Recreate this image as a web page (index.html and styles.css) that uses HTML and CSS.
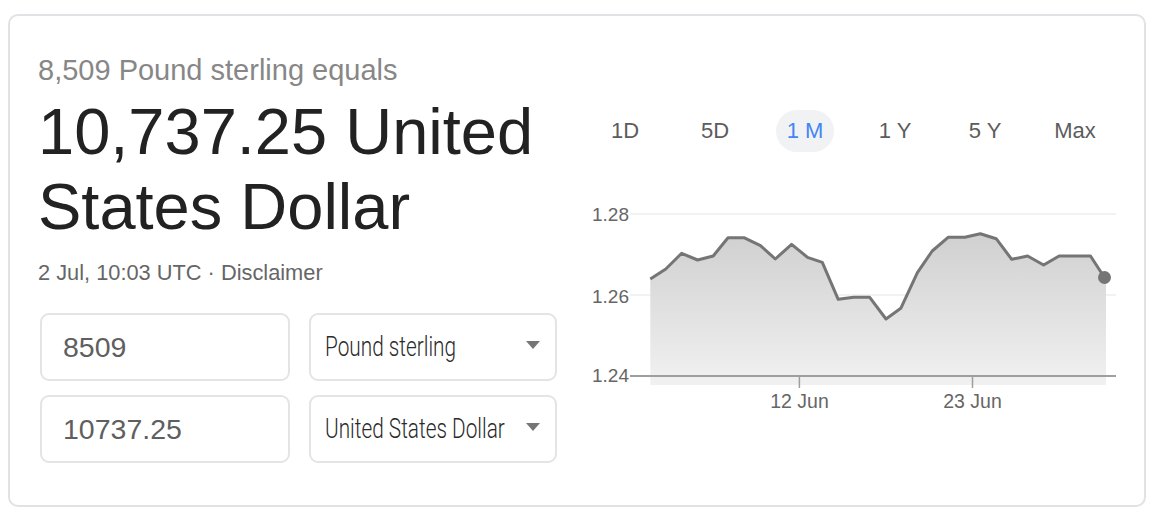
FILE: index.html
```html
<!DOCTYPE html>
<html lang="en">
<head>
<meta charset="utf-8">
<title>Currency converter</title>
<link rel="stylesheet" href="styles.css">
</head>
<body>
<div class="card">
  <div class="left">
    <div class="sub">8,509 Pound sterling equals</div>
    <div class="amount">10,737.25 United States Dollar</div>
    <div class="meta">2 Jul, 10:03 UTC · Disclaimer</div>
    <div class="converter">
      <div class="field num">8509</div>
      <div class="field select"><span class="sel-text">Pound sterling</span><span class="caret"></span></div>
      <div class="field num">10737.25</div>
      <div class="field select"><span class="sel-text">United States Dollar</span><span class="caret"></span></div>
    </div>
  </div>
  <div class="right">
    <div class="ranges">
      <div class="range"><span>1D</span></div>
      <div class="range"><span>5D</span></div>
      <div class="range active"><span>1 M</span></div>
      <div class="range"><span>1 Y</span></div>
      <div class="range"><span>5 Y</span></div>
      <div class="range"><span>Max</span></div>
    </div>
    <svg class="chart" width="540" height="220" viewBox="580 195 540 220" xmlns="http://www.w3.org/2000/svg">
      <defs>
        <linearGradient id="fillg" x1="0" y1="0" x2="0" y2="1">
          <stop offset="0" stop-color="#d0d0d0"/>
          <stop offset="1" stop-color="#f1f1f1"/>
        </linearGradient>
      </defs>
      <line x1="630" y1="214" x2="1116" y2="214" stroke="#eeeeee" stroke-width="1.5"/>
      <line x1="630" y1="295" x2="1116" y2="295" stroke="#eeeeee" stroke-width="1.5"/>
      <polygon fill="url(#fillg)" points="650.3,279 665.8,269 681.7,253.3 697.6,260 713.2,256 728,237.7 743.9,237.7 760.5,245.7 775.3,259 791.6,244.3 807.5,257.3 822.3,262.3 838.2,299.3 853.8,297.3 869.7,297.3 886,319 900.8,308.3 917.4,272.7 932.2,251 948.1,237.3 964.8,237.3 980.3,233.7 996.2,238.7 1011.7,259.3 1027.6,256 1043.6,265 1059.1,256 1075,256 1090.5,256 1104.6,277.7 1106,277.7 1106,385 650.3,385"/>
      <line x1="630" y1="376" x2="1116" y2="376" stroke="#9e9e9e" stroke-width="2"/>
      <line x1="799.4" y1="376" x2="799.4" y2="388" stroke="#9e9e9e" stroke-width="1.5"/>
      <line x1="972.5" y1="376" x2="972.5" y2="388" stroke="#9e9e9e" stroke-width="1.5"/>
      <polyline fill="none" stroke="#757575" stroke-width="3" stroke-linejoin="round" points="650.3,279 665.8,269 681.7,253.3 697.6,260 713.2,256 728,237.7 743.9,237.7 760.5,245.7 775.3,259 791.6,244.3 807.5,257.3 822.3,262.3 838.2,299.3 853.8,297.3 869.7,297.3 886,319 900.8,308.3 917.4,272.7 932.2,251 948.1,237.3 964.8,237.3 980.3,233.7 996.2,238.7 1011.7,259.3 1027.6,256 1043.6,265 1059.1,256 1075,256 1090.5,256 1104.6,277.7"/>
      <circle cx="1104.5" cy="277.5" r="6.5" fill="#757575"/>
      <text class="ylab" x="592" y="221">1.28</text>
      <text class="ylab" x="592" y="303">1.26</text>
      <text class="ylab" x="592" y="382">1.24</text>
      <text class="xlab" x="799.5" y="408" text-anchor="middle">12 Jun</text>
      <text class="xlab" x="972.5" y="408" text-anchor="middle">23 Jun</text>
    </svg>
  </div>
</div>
</body>
</html>
```
FILE: styles.css
```css
html, body {
  background: #ffffff;
}
body {
  margin: 8px;
  font-family: "Liberation Sans", Arial, Helvetica, sans-serif;
}
.card {
  box-sizing: border-box;
  width: 1138px;
  height: 493px;
  margin-top: 6px;
  border: 2px solid #e1e2e5;
  border-radius: 10px;
  display: flex;
  padding: 36px 23px 0 28px;
}
.left {
  width: 520px;
  flex: none;
}
.right {
  width: 540px;
  margin-left: 22px;
  flex: none;
}
.sub {
  font-size: 29px;
  line-height: 36px;
  color: #878787;
}
.amount {
  font-size: 65px;
  line-height: 75px;
  color: #222222;
  margin-top: 6px;
}
.meta {
  font-size: 21.8px;
  line-height: 26px;
  color: #666666;
  margin-top: 16px;
}
.converter {
  margin: 27px 0 0 2px;
  display: grid;
  grid-template-columns: 250px 248px;
  column-gap: 19px;
  row-gap: 14px;
}
.field {
  box-sizing: border-box;
  height: 68px;
  border: 2px solid #e3e4e6;
  border-radius: 9px;
  display: flex;
  align-items: center;
}
.num {
  padding-left: 21px;
  font-size: 28.5px;
  color: #5f5f5f;
}
.select {
  padding: 0 15px 0 14px;
}
.sel-text {
  flex: 1;
  width: 0;
  min-width: 0;
  font-family: Roboto, "Liberation Sans", Arial, sans-serif;
  font-weight: 300;
  font-size: 27px;
  color: #2a2a2a;
  white-space: nowrap;
  transform: scaleX(0.77);
  transform-origin: left center;
}
.caret {
  flex: none;
  width: 0;
  height: 0;
  border-left: 7.5px solid transparent;
  border-right: 7.5px solid transparent;
  border-top: 8px solid #767676;
  margin-top: -4px;
}
.ranges {
  display: flex;
  margin-top: 58px;
}
.range {
  width: 90px;
  height: 42px;
  display: flex;
  align-items: center;
  justify-content: center;
  font-size: 22px;
  color: #5c5c5c;
}
.range span {
  display: flex;
  align-items: center;
  justify-content: center;
  height: 42px;
}
.range.active span {
  width: 58px;
  border-radius: 21px;
  background: #f1f2f3;
  color: #4285f4;
}
.chart {
  display: block;
  margin-top: 43px;
}
.ylab {
  font-family: "Liberation Sans", Arial, sans-serif;
  font-size: 19px;
  fill: #666666;
}
.xlab {
  font-family: "Liberation Sans", Arial, sans-serif;
  font-size: 19.5px;
  fill: #666666;
}
```
